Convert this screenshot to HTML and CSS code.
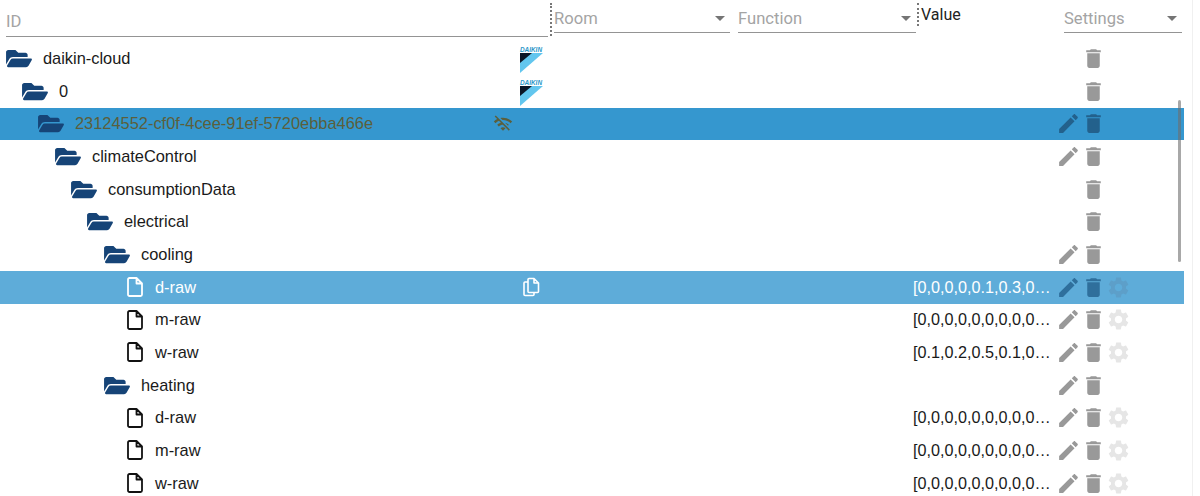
FILE: index.html
```html
<!DOCTYPE html>
<html lang="en">
<head>
  <meta charset="UTF-8">
  <title>Objects</title>
  <link rel="stylesheet" href="styles.css">
</head>
<body>
  <!-- shared icons -->
  <svg class="defs" aria-hidden="true">
    <symbol id="i-folder" viewBox="0 0 576 512"><path d="M572.694 292.093L500.27 416.248A63.997 63.997 0 0 1 444.989 448H45.025c-18.523 0-30.064-20.093-20.731-36.093l72.424-124.155A64 64 0 0 1 152 256h399.964c18.523 0 30.064 20.093 20.73 36.093zM152 224h328v-48c0-26.51-21.49-48-48-48H272l-64-64H48C21.49 64 0 85.49 0 112v278.046l69.077-118.418C86.214 242.25 117.989 224 152 224z"/></symbol>
    <symbol id="i-file" viewBox="0 0 16 20"><path d="M2.5 1h7L15 6.5V17.5a1.5 1.5 0 0 1-1.5 1.5h-11A1.5 1.5 0 0 1 1 17.5V2.5A1.5 1.5 0 0 1 2.5 1zM9.5 1v5.5H15" fill="none" stroke="currentColor" stroke-width="1.8" stroke-linejoin="round"/></symbol>
    <symbol id="i-trash" viewBox="0 0 24 24"><path d="M6 19c0 1.1.9 2 2 2h8c1.1 0 2-.9 2-2V7H6v12zM19 4h-3.5l-1-1h-5l-1 1H5v2h14V4z"/></symbol>
    <symbol id="i-edit" viewBox="0 0 24 24"><path d="M3 17.25V21h3.75L17.81 9.94l-3.75-3.75L3 17.25zM20.71 7.04c.39-.39.39-1.02 0-1.41l-2.34-2.34c-.39-.39-1.02-.39-1.41 0l-1.83 1.83 3.75 3.75 1.83-1.83z"/></symbol>
    <symbol id="i-gear" viewBox="0 0 24 24"><path d="M19.14 12.94c.04-.3.06-.61.06-.94 0-.32-.02-.64-.07-.94l2.03-1.58c.18-.14.23-.41.12-.61l-1.92-3.32c-.12-.22-.37-.29-.59-.22l-2.39.96c-.5-.38-1.03-.7-1.62-.94l-.36-2.54c-.04-.24-.24-.41-.48-.41h-3.84c-.24 0-.43.17-.47.41l-.36 2.54c-.59.24-1.13.57-1.62.94l-2.39-.96c-.22-.08-.47 0-.59.22L2.74 8.87c-.12.21-.08.47.12.61l2.03 1.58c-.05.3-.09.63-.09.94s.02.64.07.94l-2.03 1.58c-.18.14-.23.41-.12.61l1.92 3.32c.12.22.37.29.59.22l2.39-.96c.5.38 1.03.7 1.62.94l.36 2.54c.05.24.24.41.48.41h3.84c.24 0 .44-.17.47-.41l.36-2.54c.59-.24 1.13-.56 1.62-.94l2.39.96c.22.08.47 0 .59-.22l1.92-3.32c.12-.22.07-.47-.12-.61l-2.01-1.58zM12 15.6c-1.98 0-3.6-1.62-3.6-3.6s1.62-3.6 3.6-3.6 3.6 1.62 3.6 3.6-1.62 3.6-3.6 3.6z"/></symbol>
    <symbol id="i-wifioff" viewBox="0 0 24 24"><path d="M22.99 9C19.15 5.16 13.8 3.76 8.84 4.78l2.52 2.52c3.47-.17 6.99 1.05 9.63 3.7l2-2zm-4 4c-1.29-1.29-2.84-2.13-4.49-2.56l3.53 3.53.96-.97zM2 3.05L5.07 6.1C3.6 6.82 2.22 7.78 1 9l1.99 2c1.24-1.24 2.67-2.16 4.2-2.77l2.24 2.24C7.81 10.89 6.27 11.73 5 13v.01L6.99 15c1.36-1.36 3.14-2.04 4.92-2.06L18.98 20l1.27-1.26L3.29 1.79 2 3.05zM9 17l3 3 3-3c-1.65-1.66-4.34-1.66-6 0z"/></symbol>
    <symbol id="i-copy" viewBox="0 0 20 20"><path d="M8 1.5h5l4.5 4.5v8.5a1 1 0 0 1-1 1H8a1 1 0 0 1-1-1v-12a1 1 0 0 1 1-1zM13 1.5V6h4.5M7 5H4a1 1 0 0 0-1 1v11.5a1 1 0 0 0 1 1h8a1 1 0 0 0 1-1V16" fill="none" stroke="currentColor" stroke-width="1.6" stroke-linejoin="round"/></symbol>
    <symbol id="i-mark" viewBox="0 0 24 20"><path d="M1 0h23L1 20z" fill="#62c6ee"/><path d="M1 0h12L1 10z" fill="#0b1626"/></symbol>
  </svg>

  <div class="page">
    <div class="filters">
      <div class="filter filter-id"><span>ID</span></div>
      <div class="handle"></div>
      <div class="filter filter-room"><span>Room</span><i class="caret"></i></div>
      <div class="filter filter-func"><span>Function</span><i class="caret"></i></div>
      <div class="handle handle-short"></div>
      <div class="value-head">Value</div>
      <div class="filter filter-settings"><span>Settings</span><i class="caret"></i></div>
    </div>

    <div class="tree">
      <div class="row depth-0">
        <div class="name"><svg class="folder"><use href="#i-folder"/></svg>daikin-cloud</div>
        <div class="extra"><div class="logo"><span>DAIKIN</span><svg><use href="#i-mark"/></svg></div></div>
        <div class="value"></div>
        <div class="actions"><span class="slot"></span><svg class="act"><use href="#i-trash"/></svg></div>
      </div>
      <div class="row depth-1">
        <div class="name"><svg class="folder"><use href="#i-folder"/></svg>0</div>
        <div class="extra"><div class="logo"><span>DAIKIN</span><svg><use href="#i-mark"/></svg></div></div>
        <div class="value"></div>
        <div class="actions"><span class="slot"></span><svg class="act"><use href="#i-trash"/></svg></div>
      </div>
      <div class="row depth-2 row-device">
        <div class="name"><svg class="folder"><use href="#i-folder"/></svg>23124552-cf0f-4cee-91ef-5720ebba466e</div>
        <div class="extra extra-wifi"><svg class="wifi"><use href="#i-wifioff"/></svg></div>
        <div class="value"></div>
        <div class="actions"><svg class="act"><use href="#i-edit"/></svg><svg class="act"><use href="#i-trash"/></svg></div>
      </div>
      <div class="row depth-3">
        <div class="name"><svg class="folder"><use href="#i-folder"/></svg>climateControl</div>
        <div class="extra"></div>
        <div class="value"></div>
        <div class="actions"><svg class="act"><use href="#i-edit"/></svg><svg class="act"><use href="#i-trash"/></svg></div>
      </div>
      <div class="row depth-4">
        <div class="name"><svg class="folder"><use href="#i-folder"/></svg>consumptionData</div>
        <div class="extra"></div>
        <div class="value"></div>
        <div class="actions"><span class="slot"></span><svg class="act"><use href="#i-trash"/></svg></div>
      </div>
      <div class="row depth-5">
        <div class="name"><svg class="folder"><use href="#i-folder"/></svg>electrical</div>
        <div class="extra"></div>
        <div class="value"></div>
        <div class="actions"><span class="slot"></span><svg class="act"><use href="#i-trash"/></svg></div>
      </div>
      <div class="row depth-6">
        <div class="name"><svg class="folder"><use href="#i-folder"/></svg>cooling</div>
        <div class="extra"></div>
        <div class="value"></div>
        <div class="actions"><svg class="act"><use href="#i-edit"/></svg><svg class="act"><use href="#i-trash"/></svg></div>
      </div>
      <div class="row depth-7 row-selected">
        <div class="name"><svg class="file"><use href="#i-file"/></svg>d-raw</div>
        <div class="extra"><svg class="copy"><use href="#i-copy"/></svg></div>
        <div class="value">[0,0,0,0,0.1,0.3,0,0,0,0,0,0,0,0,0,0,0,0,0,0,0,0,0,0]</div>
        <div class="actions"><svg class="act"><use href="#i-edit"/></svg><svg class="act"><use href="#i-trash"/></svg><svg class="act gear"><use href="#i-gear"/></svg></div>
      </div>
      <div class="row depth-7">
        <div class="name"><svg class="file"><use href="#i-file"/></svg>m-raw</div>
        <div class="extra"></div>
        <div class="value">[0,0,0,0,0,0,0,0,0,0,0,0,0,0,0,0,0,0,0,0,0,0,0,0]</div>
        <div class="actions"><svg class="act"><use href="#i-edit"/></svg><svg class="act"><use href="#i-trash"/></svg><svg class="act gear"><use href="#i-gear"/></svg></div>
      </div>
      <div class="row depth-7">
        <div class="name"><svg class="file"><use href="#i-file"/></svg>w-raw</div>
        <div class="extra"></div>
        <div class="value">[0.1,0.2,0.5,0.1,0,0,0,0,0,0,0,0,0,0,0,0,0,0,0,0]</div>
        <div class="actions"><svg class="act"><use href="#i-edit"/></svg><svg class="act"><use href="#i-trash"/></svg><svg class="act gear"><use href="#i-gear"/></svg></div>
      </div>
      <div class="row depth-6">
        <div class="name"><svg class="folder"><use href="#i-folder"/></svg>heating</div>
        <div class="extra"></div>
        <div class="value"></div>
        <div class="actions"><svg class="act"><use href="#i-edit"/></svg><svg class="act"><use href="#i-trash"/></svg></div>
      </div>
      <div class="row depth-7">
        <div class="name"><svg class="file"><use href="#i-file"/></svg>d-raw</div>
        <div class="extra"></div>
        <div class="value">[0,0,0,0,0,0,0,0,0,0,0,0,0,0,0,0,0,0,0,0,0,0,0,0]</div>
        <div class="actions"><svg class="act"><use href="#i-edit"/></svg><svg class="act"><use href="#i-trash"/></svg><svg class="act gear"><use href="#i-gear"/></svg></div>
      </div>
      <div class="row depth-7">
        <div class="name"><svg class="file"><use href="#i-file"/></svg>m-raw</div>
        <div class="extra"></div>
        <div class="value">[0,0,0,0,0,0,0,0,0,0,0,0,0,0,0,0,0,0,0,0,0,0,0,0]</div>
        <div class="actions"><svg class="act"><use href="#i-edit"/></svg><svg class="act"><use href="#i-trash"/></svg><svg class="act gear"><use href="#i-gear"/></svg></div>
      </div>
      <div class="row depth-7">
        <div class="name"><svg class="file"><use href="#i-file"/></svg>w-raw</div>
        <div class="extra"></div>
        <div class="value">[0,0,0,0,0,0,0,0,0,0,0,0,0,0,0,0,0,0,0,0,0,0,0,0]</div>
        <div class="actions"><svg class="act"><use href="#i-edit"/></svg><svg class="act"><use href="#i-trash"/></svg><svg class="act gear"><use href="#i-gear"/></svg></div>
      </div>
      <div class="scrollbar"></div>
    </div>
  </div>
</body>
</html>
```

FILE: styles.css
```css
* {
  box-sizing: border-box;
}

html, body {
  height: 100%;
}

body {
  margin: 0;
  background: #fff;
  color: #1a1a1a;
  font-family: "Liberation Sans", Arial, sans-serif;
  overflow: hidden;
}

.defs {
  display: none;
}

.page {
  width: 1193px;
  height: 100%;
  border-right: 1px solid #f0f0f0;
  overflow: hidden;
}

/* header filters */
.filters {
  display: flex;
  align-items: flex-start;
  height: 42.4px;
  padding-left: 6px;
  font-family: Roboto, sans-serif;
  font-size: 16.6px;
  color: #a4a4a4;
}

.filter {
  display: flex;
  align-items: center;
  justify-content: space-between;
  border-bottom: 1px solid #949494;
  margin-top: 4px;
  height: 29px;
}

.filter-id {
  width: 542px;
  height: 33px;
  padding-top: 2px;
}

.filter-room {
  width: 176px;
}

.filter-func {
  width: 178px;
  margin-left: 8px;
}

.filter-settings {
  width: 118px;
  margin-left: 103px;
}

.caret {
  width: 0;
  height: 0;
  margin-right: 5px;
  border-left: 5px solid transparent;
  border-right: 5px solid transparent;
  border-top: 5px solid #757575;
}

.handle {
  width: 2px;
  height: 33px;
  margin: 3px 2px 0 2px;
  border-left: 2px dotted #777;
}

.handle-short {
  height: 23px;
  margin: 3px 2px 0 1px;
}

.value-head {
  width: 40px;
  margin-top: 5px;
  color: #222;
  font-size: 16px;
}

/* object tree */
.tree {
  position: relative;
  width: 1184px;
}

.row {
  display: grid;
  grid-template-columns: 519px 394px 143px 128px;
  align-items: center;
  height: 32.65px;
  font-size: 16.4px;
}

.row-device {
  background: #3597cf;
}

.row-device .name {
  color: #5b5f3c;
}

.row-selected {
  background: #5eacd9;
  color: #fff;
}

.name {
  display: flex;
  align-items: center;
  white-space: nowrap;
  min-width: 0;
}

.depth-0 .name { padding-left: 6px; }
.depth-1 .name { padding-left: 22px; }
.depth-2 .name { padding-left: 38px; }
.depth-3 .name { padding-left: 55px; }
.depth-4 .name { padding-left: 71px; }
.depth-5 .name { padding-left: 87px; }
.depth-6 .name { padding-left: 104px; }
.depth-7 .name { padding-left: 127px; }

.folder {
  flex: none;
  width: 26px;
  height: 23px;
  margin-right: 11px;
  fill: #164477;
}

.file {
  flex: none;
  width: 16px;
  height: 20px;
  margin-right: 12px;
  color: #111;
}

.row-selected .file {
  color: #fff;
}

.extra {
  display: flex;
  align-items: center;
}

.extra-wifi {
  margin-left: -26px;
}

.wifi {
  width: 20px;
  height: 20px;
  fill: #5b5f3c;
}

.copy {
  width: 20px;
  height: 20px;
  margin-left: 2px;
  color: #fff;
}

.logo {
  display: flex;
  flex-direction: column;
  width: 24px;
  margin-top: 3px;
}

.logo span {
  font-size: 6.4px;
  font-weight: bold;
  font-style: italic;
  line-height: 6px;
  text-align: center;
  color: #2a97c9;
}

.logo svg {
  width: 24px;
  height: 20px;
}

.value {
  font-size: 16.2px;
  white-space: nowrap;
  overflow: hidden;
  text-overflow: ellipsis;
  padding-right: 3px;
}

.actions {
  display: flex;
  align-items: center;
}

.slot,
.act {
  flex: none;
  width: 25px;
  height: 25px;
}

.act {
  fill: #999;
}

.gear {
  fill: #e6e6e6;
}

.row-device .act {
  fill: #23618c;
}

.row-selected .act {
  fill: #2f6f9c;
}

.row-selected .gear {
  fill: #5d9fc9;
}

.scrollbar {
  position: absolute;
  top: 58px;
  left: 1178px;
  width: 3px;
  height: 162px;
  background: rgba(110, 110, 110, 0.6);
  border-radius: 2px;
}
```
